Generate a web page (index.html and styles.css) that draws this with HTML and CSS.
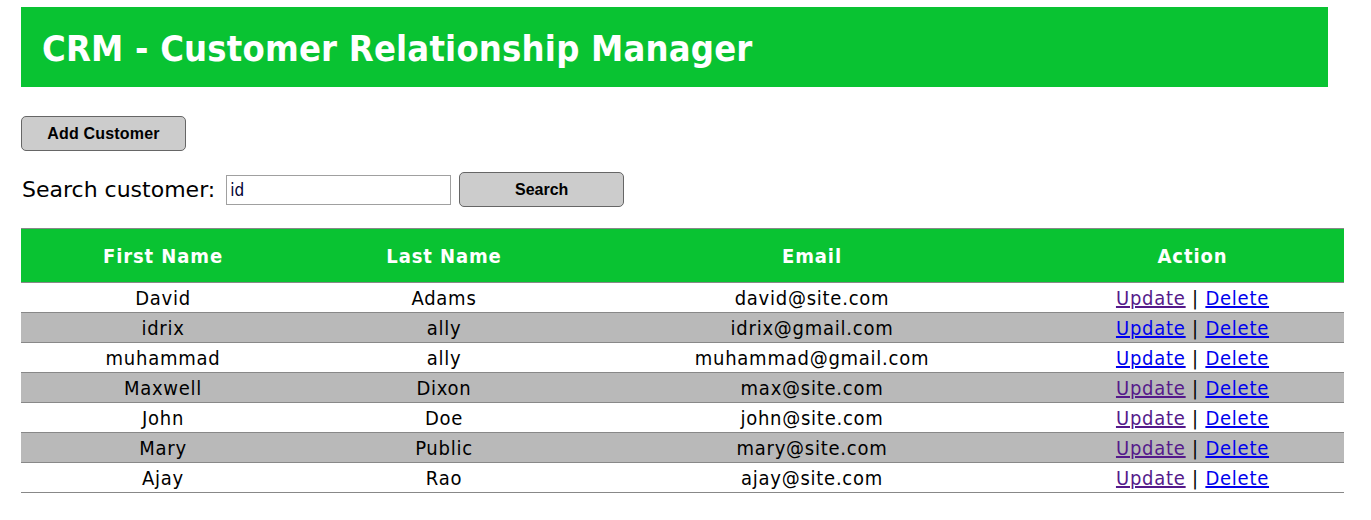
FILE: index.html
```html
<!DOCTYPE html>
<html>
<head>
<meta charset="utf-8">
<title>CRM</title>
<link rel="stylesheet" href="styles.css">
</head>
<body>
<div class="wrapper">
  <div class="header">
    <h2 class="title">CRM - Customer Relationship Manager</h2>
  </div>
</div>
<div class="container">
  <div class="content">
    <input type="button" class="add-button" value="Add Customer">
    <form class="search-form">
      <label class="search-label">Search customer:</label>
      <input type="text" class="search-input" value="id">
      <input type="button" class="search-button" value="Search">
    </form>
    <table class="list">
      <thead>
        <tr>
          <th>First Name</th>
          <th>Last Name</th>
          <th>Email</th>
          <th>Action</th>
        </tr>
      </thead>
      <tbody>
        <tr><td>David</td><td>Adams</td><td>david@site.com</td><td><a href="#" class="visited">Update</a> | <a href="#" class="link">Delete</a></td></tr>
        <tr><td>idrix</td><td>ally</td><td>idrix@gmail.com</td><td><a href="#" class="link">Update</a> | <a href="#" class="link">Delete</a></td></tr>
        <tr><td>muhammad</td><td>ally</td><td>muhammad@gmail.com</td><td><a href="#" class="link">Update</a> | <a href="#" class="link">Delete</a></td></tr>
        <tr><td>Maxwell</td><td>Dixon</td><td>max@site.com</td><td><a href="#" class="visited">Update</a> | <a href="#" class="link">Delete</a></td></tr>
        <tr><td>John</td><td>Doe</td><td>john@site.com</td><td><a href="#" class="visited">Update</a> | <a href="#" class="link">Delete</a></td></tr>
        <tr><td>Mary</td><td>Public</td><td>mary@site.com</td><td><a href="#" class="visited">Update</a> | <a href="#" class="link">Delete</a></td></tr>
        <tr><td>Ajay</td><td>Rao</td><td>ajay@site.com</td><td><a href="#" class="visited">Update</a> | <a href="#" class="link">Delete</a></td></tr>
      </tbody>
    </table>
  </div>
</div>
</body>
</html>
```
FILE: styles.css
```css
html, body {
  margin: 0;
  padding: 0;
  background: #ffffff;
  font-family: "DejaVu Sans Condensed", "DejaVu Sans", sans-serif;
}

.wrapper {
  padding: 7px 0 0 21px;
}

.header {
  width: 1307px;
  height: 80px;
  background: #09c332;
  display: flex;
  align-items: center;
}

.title {
  margin: 2px 0 0 21px;
  color: #ffffff;
  font-size: 36px;
  font-weight: bold;
  letter-spacing: 0.2px;
}

.container {
  padding: 29px 0 0 21px;
}

.add-button {
  display: block;
  width: 165px;
  height: 35px;
  margin: 0;
  background: #cccccc;
  border: 1px solid #666666;
  border-radius: 5px;
  font-family: "Liberation Sans", Arial, sans-serif;
  font-size: 16px;
  font-weight: bold;
  letter-spacing: 0.2px;
  color: #000000;
}

.search-form {
  display: flex;
  align-items: center;
  margin: 21px 0 0 1px;
  height: 35px;
}

.search-label {
  font-family: "DejaVu Sans", sans-serif;
  font-size: 22px;
  color: #000;
  margin-right: 11px;
}

.search-input {
  width: 225px;
  height: 30px;
  box-sizing: border-box;
  border: 1px solid #a0a0a0;
  padding: 0 3px;
  font-family: "DejaVu Sans Condensed", sans-serif;
  font-size: 17px;
  color: #000033;
  margin: 0;
}

.search-button {
  width: 165px;
  height: 35px;
  margin: 0 0 0 8px;
  background: #cccccc;
  border: 1px solid #666666;
  border-radius: 5px;
  font-family: "Liberation Sans", Arial, sans-serif;
  font-size: 16px;
  font-weight: bold;
  color: #000000;
}

.list {
  margin-top: 21px;
  width: 1323px;
  border-collapse: collapse;
  border-top: 1px solid #888888;
}

.list th {
  background: #09c332;
  color: #ffffff;
  font-size: 20px;
  font-weight: bold;
  letter-spacing: 0.9px;
  height: 53px;
  padding: 0;
  border-bottom: 1px solid #888888;
}

.list th:nth-child(1) { width: 284px; }
.list th:nth-child(2) { width: 278px; }
.list th:nth-child(3) { width: 458px; }

.list td {
  text-align: center;
  font-size: 20px;
  letter-spacing: 0.75px;
  height: 29px;
  padding: 0;
  border-bottom: 1px solid #888888;
  color: #000;
}

.list tbody tr:nth-child(even) td {
  background: #b9b9b9;
}

.link { color: #0000ee; }
.visited { color: #551a8b; }
```
